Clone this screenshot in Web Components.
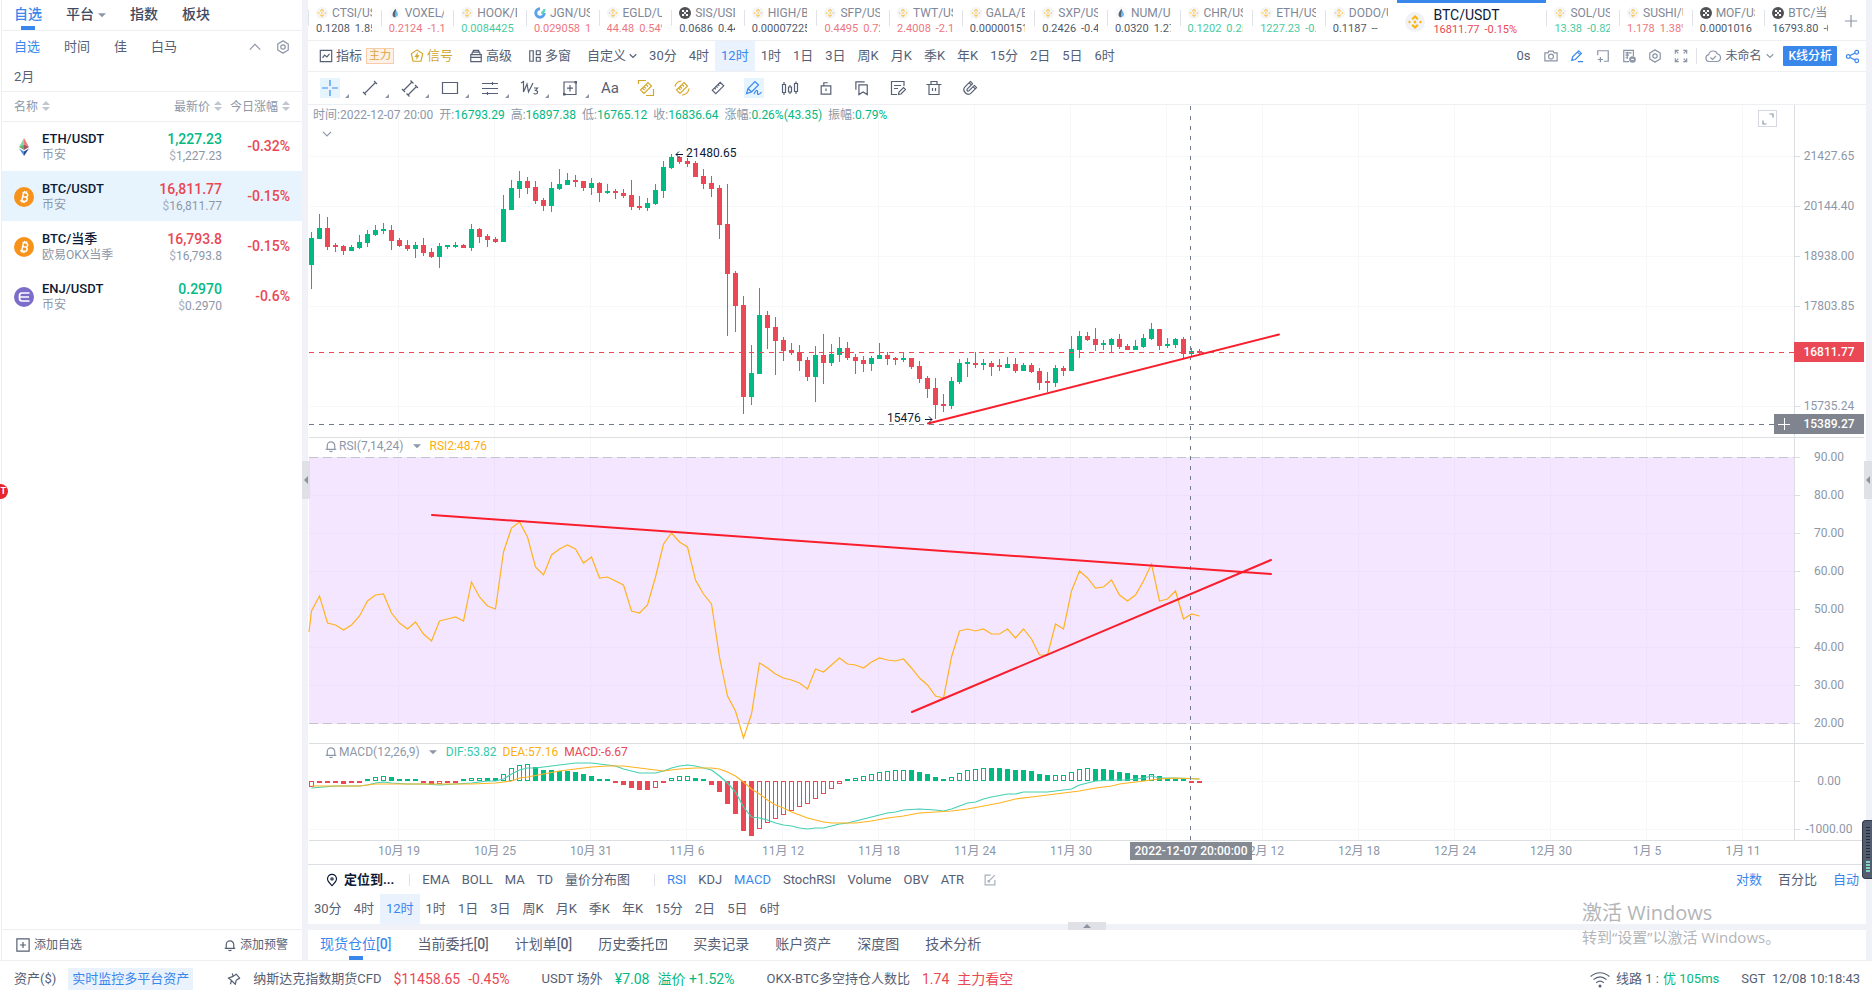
<!DOCTYPE html>
<html lang="zh-CN">
<head>
<meta charset="utf-8">
<meta name="viewport" content="width=device-width, initial-scale=1">
<title>BTC/USDT 16811.77</title>
<style>
  html, body { margin: 0; }
  body {
    --blue: #3a87ec; --ink: #566074; --dark: #0e1a35; --muted: #8d97a8;
    --up: #03b983; --down: #e94854; --line: #edeff3; --gutter: #f1f2f7; --tint: #e9f2fd; --gold: #d4a72c;
    font: 13px/20px Roboto, "Noto Sans CJK SC", sans-serif;
    color: var(--ink); background: #fff;
  }
</style>
</head>
<body>
<trade-app></trade-app>
<script>
const BASE = `
  *, *::before { box-sizing: border-box; }
  :host { display: block; }
  :host([hidden]) { display: none; }
  button { font: inherit; color: inherit; background: none; border: 0; padding: 0; margin: 0; white-space: nowrap; cursor: pointer; }
  a { color: inherit; text-decoration: none; }
  .up { color: var(--up); } .down { color: var(--down); }
`;
function define(tag, css, html, ready) {
  const tpl = document.createElement('template');
  tpl.innerHTML = '<style>' + BASE + css + '</style>' + html;
  customElements.define(tag, class extends HTMLElement {
    connectedCallback() {
      if (this.shadowRoot) return;
      const root = this.attachShadow({ mode: 'open' });
      root.appendChild(tpl.content.cloneNode(true));
      if (ready) ready.call(this, root);
    }
  });
}

/* ---------- icons (16 x 16 grid, stroked with the current colour) ---------- */
const F = 'fill="currentColor" stroke="none"';
const ICONS = {
  chart: '<path d="M1.500 1.500h13v13h-13zM4 10l2.500-3 2.500 2 3-3.500"/>',
  signal: '<path d="M8 1l6.500 4.500-2 8.500h-9l-2-8.500z" stroke-linejoin="round"/><path d="M9 3.500L5 9h2.500L7 12.500 11 7H8.500z" '+F+'/>',
  box: '<path d="M2 6.500h12v8H2zM2 9.500h12M3 6.500l1-3h8l1 3M5 3.500v-2h6v2"/>',
  windows: '<path d="M2 2h4v12H2zM9.500 2H14v4.500H9.500zM9.500 9.500H14V14H9.500z"/>',
  down: '<path d="M1.500 4.500L8 11l6.500-6.500"/>',
  up: '<path d="M1 11.500L8 4.500l7 7"/>',
  hex: '<path d="M8 1l6 3.500v7L8 15l-6-3.500v-7z" stroke-linejoin="round"/><circle cx="8" cy="8" r="2.500"/>',
  camera: '<path d="M1 4.500h3.500l1-2h5l1 2H15v9H1z"/><circle cx="8" cy="8.700" r="2.800"/>',
  pencil: '<path d="M2 13l1-4 7-7 3 3-7 7zM8.500 3.500l3 3M9 14.500h6"/>',
  addpane: '<path d="M2 7V2h12v12H9M2 12h6M5 9v6"/>',
  save: '<path d="M13 8V1.500H2v13h6M4 4.500h7M4 7h4M6 3v8M4 10h3"/><circle cx="12" cy="12" r="3.800" '+F+'/><path d="M10.500 12h3" stroke="#fff"/>',
  expand: '<path d="M5.500 1.500h-4v4M1.500 1.500L5 5M10.500 1.500h4v4M14.500 1.500L11 5M5.500 14.500h-4v-4M1.500 14.500L5 11M10.500 14.500h4v-4M14.500 14.500L11 11"/>',
  cloud: '<path d="M4 13.500a3.500 3.500 0 01-.3-6.900A4.600 4.600 0 0112.500 6 3.800 3.800 0 0112 13.500z"/><path d="M5.500 9.500l2 2 3.500-3.500"/>',
  share: '<circle cx="3.500" cy="8" r="2"/><circle cx="12.500" cy="3.500" r="2"/><circle cx="12.500" cy="12.500" r="2"/><path d="M5.300 7l5.400-2.600M5.300 9l5.400 2.600"/>',
  cross: '<path d="M8 0v6M8 10v6M0 8h6M10 8h6"/>',
  line: '<path d="M2.500 13.500l11-11M1 12l3 3M12 1l3 3"/>',
  channel: '<path d="M1.500 10.500l8.500-8.500M6 15l8.500-8.500M0 9l3 3M8.500 .5l3 3M4.500 13.500l3 3M13 5l3 3"/>',
  rect: '<path d="M.5 2.500h15v11H.5z"/>',
  hlines: '<path d="M0 3.500h16M0 8.500h16M0 13.500h16M10.500 2v3M5.500 12v3"/>',
  wave: '<path d="M-1 3l2.500-1.500V12L5 4l1.500 8L11 3"/><path d="M12 8h3.500l-2 2.500c3 0 2.500 3.500 0 3.500-1 0-1.500-.5-1.500-1"/>',
  plusbox: '<path d="M2 2h12v12.500H2zM8 5v6.500M5 8.200h6"/><path d="M1 13h2.500v2.500H1zM12.500 1H15v2.500h-2.500z" '+F+'/>',
  ruler: '<path d="M1.500 10.500l9-9 4 4-9 9zM8 4l1.500 1.500M6 6l1.500 1.500M4 8l1.500 1.500"/>',
  rulersq: '<path d="M2.500 10l7.500-7.500 3.500 3.500L6 13.500zM8 4.500l2 2M6 6.500l2 2M4.500 8l2 2M.5 4V.5H8M15.500 9v6.500H8"/>',
  rulercirc: '<path d="M2.500 10l7.500-7.500 3.500 3.500L6 13.500zM8 4.500l2 2M6 6.500l2 2M4.500 8l2 2M1 6.500A7 7 0 017.500 1M15 8.500A7 7 0 018 15"/>',
  brush: '<path d="M.5 13.500l1.500-5 7-7 3.500 3.500-7 7-5 1.500zM2 8.500l3.500 3.500M8 14c3-6 4-3 3.500-1s2 2 4-1"/>',
  candles: '<path d="M.5 4.500h3v8h-3zM2 2v2.500M2 12.500V15M6.500 7h3v5h-3zM8 5v2M8 12v2M12.500 3.500h3v8h-3zM14 1.500v2M14 11.500V14"/>',
  lock: '<path d="M2.500 5.500h11v9.500h-11zM5.500 5.500v-3.500h4.500M8 8.500v3"/>',
  bookmark: '<path d="M4.500 4.500H14V15.500l-4.750-3-4.750 3zM1 10V1h10"/>',
  note: '<path d="M14 6V1.500H1.500v13H7M4 5.500h7M4 8.500h4M8.500 14.500l.5-2.500 4.500-4.500 2 2L11 14z"/>',
  trash: '<path d="M.5 4.500h15M3 4.500v10h10v-10M5 4.500v-3h6v3M6.500 8v3M9.500 8v3"/>',
  magnet: '<path d="M8.500 .5L2.500 6.500C-2 11 5 18 9.500 13.500L15.500 7.500 13 5 7 11C5.500 12.500 3.500 10.500 5 9L11 3zM7 2L9.500 4.500M11.500 6.500L14 9" stroke-linejoin="round"/>',
  bell: '<path d="M3 12.500V7.500a5 5 0 0110 0v5M1 12.500h14M6 14.500c1 1 3 1 4 0"/>',
  pin: '<path d="M8 15.500C5 12 2 9.500 2 6.500a6 6 0 0112 0C14 9.500 11 12 8 15.500z"/><circle cx="8" cy="6.500" r="1.500"/>',
  edit: '<path d="M9 1.500H1.500v13h13V8M6 10l8.500-8.500M5.500 8v2.500H8"/>',
  addbox: '<path d="M1 1h14v14H1zM8 4.500v7M4.500 8h7"/>',
  help: '<path d="M1 1h14v14H1z"/><path d="M5.800 6.200c0-3 4.600-2.600 4.400 0C10 7.700 8 7.700 8 9.500M8 11v1.300"/>',
  tack: '<path d="M6 1.500l1 3.500-5.500 2 3.500 2.500L4 14M5 9.500l4.500 4.500 1-4.500L14.500 7 10.500 2.500 7 5" stroke-linejoin="round"/>',
  plus: '<path d="M8 1v14M1 8h14"/>',
  wifi: '<path d="M.5 6c4.500-4 10.500-4 15 0M2.800 8.500c3.500-3 7-3 10.400 0M5 11c2-1.700 4-1.700 6 0"/><circle cx="8" cy="13.500" r="1.200" '+F+'/>',
  caret: '<path d="M0 4.500h16l-8 8z" '+F+'/>',
  corner: '<path d="M9.500 3H13v3.500M3 9.500V13h3.500"/>'
};
define('ui-icon', `
  :host { display: inline-block; flex: none; width: var(--size, 14px); height: var(--size, 14px); }
  svg { display: block; width: 100%; height: 100%; overflow: visible; fill: none; stroke: currentColor; stroke-width: 1.2; }
  svg * { vector-effect: non-scaling-stroke; }
`, '<svg viewBox="0 0 16 16" aria-hidden="true"></svg>', function (root) {
  root.querySelector('svg').innerHTML = ICONS[this.getAttribute('name')] || '';
});

/* ---------- coin and exchange marks ---------- */
const COINS = {
  bnb: '<circle cx="10" cy="10" r="10" fill="#f1f2f6"/><g fill="#fbb40f"><path d="M10 3l3.600 3.600-1.500 1.500L10 6 7.900 8.100 6.400 6.600z"/><path d="M10 17l3.600-3.600-1.500-1.500L10 14l-2.100-2.100-1.500 1.500z"/><path d="M4.500 8.500L6 10l-1.500 1.500L3 10zM15.500 8.500L17 10l-1.500 1.500L14 10zM10 8.300l1.700 1.700-1.700 1.700L8.300 10z"/></g>',
  okx: '<circle cx="10" cy="10" r="10" fill="#15171c"/><path d="M5 5h3.500v3.500H5zM11.500 5H15v3.500h-3.500zM8.500 8.500h3v3h-3zM5 11.500h3.500V15H5zM11.500 11.500H15V15h-3.500z" fill="#fff"/>',
  gate: '<circle cx="10" cy="10" r="10" fill="#f6f7fa"/><path d="M11 3c-2 4-4 6-4 9.500a4 4 0 008 0c0-4-3-5-4-9.500z" fill="#3aa5e8"/><path d="M11 3c-3 4-5 6-5 9.500A4 4 0 0011 17c-3-4 1-8 0-14z" fill="#1d2b45"/>',
  kucoin: '<path d="M10 3a7 7 0 107 7" fill="none" stroke="#2383e8" stroke-width="5"/><path d="M12 9.500a5 5 0 005-6" fill="none" stroke="#24cba6" stroke-width="4"/>',
  btc: '<circle cx="10" cy="10" r="10" fill="#f7931a"/><path d="M7.500 5.800h3.700c2.600 0 2.700 3.400.3 3.900 3 .3 2.800 4.500-.5 4.500H7M8.600 5.800v8.400M8.600 9.800h3M9.500 4v2M11.500 4v2M9 14v2M11 14v2" stroke="#fff" stroke-width="1.500" fill="none" transform="rotate(12 10 10)"/>',
  eth: '<path d="M10 1L5 10l5-2.500z" fill="#8fd3a8"/><path d="M10 1l5 9-5-2.500z" fill="#ef7d75"/><path d="M5 10l5-2.500V13z" fill="#5fb56b"/><path d="M15 10l-5-2.500V13z" fill="#a3546d"/><path d="M5 11.500l5 3V19z" fill="#4a90e2"/><path d="M15 11.500l-5 3V19z" fill="#2a4c8f"/>',
  enj: '<circle cx="10" cy="10" r="10" fill="#7b6dc9"/><path d="M15.500 6H8c-2 0-2.500 1-2.500 3v2c0 2 1 3 2.500 3h7.500M6 10h9" stroke="#fff" stroke-width="1.700" fill="none"/>'
};
define('coin-mark', `
  :host { display: inline-block; flex: none; width: var(--size, 20px); height: var(--size, 20px); }
  svg { display: block; width: 100%; height: 100%; }
`, '<svg viewBox="0 0 20 20" aria-hidden="true"></svg>', function (root) {
  root.querySelector('svg').innerHTML = COINS[this.getAttribute('name')];
});

/* ---------- left watch list ---------- */
define('watch-list', `
  :host { display: flex; flex-direction: column; border-left: 1px solid var(--line); }
  .top, .groups { display: flex; align-items: center; gap: 24px; padding: 0 12px; }
  .top { height: 31px; border-bottom: 1px solid var(--line); font-size: 14px; font-weight: 500; color: #3f4a60; }
  .top button { position: relative; height: 30px; padding-bottom: 2px; }
  .on { color: var(--blue); }
  .top .on::before { content: ""; position: absolute; bottom: 0; left: 7px; width: 14px; height: 4px; background: var(--blue); }
  .top ui-icon { --size: 8px; margin-left: 4px; color: var(--muted); }
  .groups { height: 31px; }
  .groups .tools { display: flex; align-items: center; gap: 15px; margin-left: auto; color: var(--muted); }
  .groups .tools ui-icon { display: block; }
  .small { --size: 12px; }
  .more { height: 30px; border-bottom: 1px solid var(--line); }
  table { width: 100%; border-collapse: collapse; }
  th { height: 29px; padding: 2px 0 0; font-size: 12px; font-weight: 400; text-align: right; color: var(--muted); border-bottom: 1px solid var(--line); white-space: nowrap; }
  th:first-child { text-align: left; padding-left: 12px; }
  th:last-child, td:last-child { width: 80px; padding-right: 12px; }
  .sort { display: inline-block; width: 8px; height: 10px; margin-left: 4px; fill: #c1c7d1; }
  td { height: 50px; padding: 2px 0 0; text-align: right; line-height: 16px; }
  td:last-child { padding-top: 0; }
  td:first-child { text-align: left; padding-left: 12px; }
  td small { display: block; font-size: 12px; color: var(--muted); }
  td i { font-style: normal; opacity: .75; }
  .pair { display: flex; align-items: center; gap: 8px; }
  .pair b { font-weight: 500; color: var(--dark); }
  td strong, td em { font-style: normal; font-size: 14px; font-weight: 500; }
  tr.sel td { background: #e8f4fd; }
  .foot { display: flex; justify-content: space-between; align-items: center; height: 31px; margin-top: auto; padding: 0 14px; border-top: 1px solid var(--line); font-size: 12px; }
  .foot button { display: flex; align-items: center; gap: 4px; }
  .foot .bell { --size: 12px; }
`, `
  <nav class="top"><button class="on">自选</button><button>平台<ui-icon name="caret"></ui-icon></button><button>指数</button><button>板块</button></nav>
  <nav class="groups"><button class="on">自选</button><button>时间</button><button>佳</button><button>白马</button>
    <span class="tools"><button class="small" aria-label="收起"><ui-icon name="up"></ui-icon></button><button aria-label="设置"><ui-icon name="hex"></ui-icon></button></span></nav>
  <nav class="groups more"><button>2月</button></nav>
  <table><thead><tr></tr></thead><tbody></tbody></table>
  <div class="foot"><button><ui-icon name="addbox"></ui-icon>添加自选</button><button class="bell"><ui-icon name="bell"></ui-icon>添加预警</button></div>
`, function (root) {
  const sort = '<svg class="sort" viewBox="0 0 8 10"><path d="M4 0l4 4H0zM4 10l4-4H0z"/></svg>';
  root.querySelector('thead tr').innerHTML = ['名称', '最新价', '今日涨幅'].map(t => `<th scope="col">${t}${sort}</th>`).join('');
  root.querySelector('tbody').innerHTML = [
    ['eth', 'ETH/USDT', '币安', '1,227.23', 'up', '-0.32%'],
    ['btc', 'BTC/USDT', '币安', '16,811.77', 'down', '-0.15%', 'sel'],
    ['btc', 'BTC/当季', '欧易OKX当季', '16,793.8', 'down', '-0.15%'],
    ['enj', 'ENJ/USDT', '币安', '0.2970', 'up', '-0.6%']
  ].map(r => `<tr class="${r[6] || ''}"><td><div class="pair"><coin-mark name="${r[0]}"></coin-mark><div><b>${r[1]}</b><small>${r[2]}</small></div></div></td>
    <td><strong class="${r[4]}">${r[3]}</strong><small><i>$</i>${r[3]}</small></td><td><em class="down">${r[5]}</em></td></tr>`).join('');
});

/* ---------- ticker strip ---------- */
define('ticker-bar', `
  :host { display: flex; height: 41px; border-bottom: 1px solid var(--line); }
  .tab { flex: 1 1 0; min-width: 0; position: relative; text-align: left; padding: 0 9px 0 8px; line-height: 16px; overflow: hidden; }
  .tab:not(.on)::before { content: ""; position: absolute; left: 0; top: 10px; width: 1px; height: 16px; background: #dfe2e8; }
  .tab:first-child::before { display: none; }
  .in { opacity: .75; overflow: hidden; }
  .name { display: flex; align-items: center; gap: 4px; height: 18px; font-size: 12px; --size: 12px; }
  .val { display: flex; gap: 5px; height: 14px; font-size: 11px; line-height: 14px; color: var(--dark); }
  .val.up { color: var(--up); } .val.down { color: var(--down); }
  .tab.on { flex: 0 0 149px; display: flex; align-items: center; gap: 8px; border-top: 3px solid var(--blue); }
  .on .name { font-size: 14px; height: 17px; color: var(--dark); }
  .on .in { opacity: 1; }
  .add { flex: 0 0 29px; color: var(--muted); }
  .add ui-icon { vertical-align: middle; }
`, '', function (root) {
  const list = [
    ['bnb', 'CTSI/USDT', '0.1208', '1.85%', ''], ['gate', 'VOXEL/USDT', '0.2124', '-1.17%', 'down'], ['bnb', 'HOOK/BNB', '0.0084425', '', 'up'],
    ['kucoin', 'JGN/USDT', '0.029058', '1.2%', 'down'], ['bnb', 'EGLD/USDT', '44.48', '0.54%', 'down'], ['okx', 'SIS/USDT', '0.0686', '0.44%', ''],
    ['bnb', 'HIGH/BTC', '0.000072250', '', ''], ['bnb', 'SFP/USDT', '0.4495', '0.72%', 'down'], ['bnb', 'TWT/USDT', '2.4008', '-2.11%', 'down'],
    ['bnb', 'GALA/BNB', '0.00000151', '', ''], ['bnb', 'SXP/USDT', '0.2426', '-0.45%', ''], ['gate', 'NUM/USDT', '0.0320', '1.27%', ''],
    ['bnb', 'CHR/USDT', '0.1202', '0.25%', 'up'], ['bnb', 'ETH/USDT', '1227.23', '-0.32%', 'up'], ['bnb', 'DODO/USDT', '0.1187', '--', ''],
    ['bnb', 'BTC/USDT', '16811.77', '-0.15%', 'down', 'on'],
    ['bnb', 'SOL/USDT', '13.38', '-0.82%', 'up'], ['bnb', 'SUSHI/USDT', '1.178', '1.38%', 'down'], ['okx', 'MOF/USDT', '0.0001016', '', ''], ['okx', 'BTC/当季', '16793.80', '-0.15%', '']
  ];
  const cells = list.map(([c, n, p, d, k, s]) => {
    const mark = `<coin-mark name="${c}"></coin-mark>`, val = `<div class="val ${k}"><span>${p}</span><span>${d}</span></div>`;
    return s === 'on'
      ? `<button class="tab on">${mark}<div class="in"><div class="name">${n}</div>${val}</div></button>`
      : `<button class="tab"><div class="in"><div class="name">${mark}<span>${n}</span></div>${val}</div></button>`;
  }).join('');
  root.innerHTML += cells + '<button class="add" aria-label="添加"><ui-icon name="plus"></ui-icon></button>';
});

/* ---------- interval picker, used above and below the chart ---------- */
define('period-picker', `
  :host { display: flex; height: 30px; }
  button { padding: 0 6px; height: 30px; }
  .on { background: var(--tint); color: var(--blue); }
`, '', function (root) {
  root.innerHTML += ['30分', '4时', '12时', '1时', '1日', '3日', '周K', '月K', '季K', '年K', '15分', '2日', '5日', '6时']
    .map(t => `<button${t === '12时' ? ' class="on" aria-pressed="true"' : ''}>${t}</button>`).join('');
});

/* ---------- chart toolbar ---------- */
define('chart-toolbar', `
  :host { display: flex; align-items: center; height: 31px; padding: 0 6px 0 11px; border-bottom: 1px solid var(--line); }
  .left, .right, .right .icons, .left button { display: flex; align-items: center; }
  .left { gap: 16px; }
  .left button { gap: 3px; }
  .badge { margin-left: 1px; padding: 0 2px; height: 16px; border: 1px solid #f6cda8; background: #fdf1e7; color: #dda345; font-size: 11px; line-height: 14px; width: 28px; text-align: center; }
  .gold { color: var(--gold); }
  .drop { --size: 8px; }
  period-picker { margin-left: 6px; }
  .right { margin-left: auto; gap: 8px; }
  .icons { gap: 12px; color: #8b95a6; margin: 0 0 0 6px; }
  .icons button, .share { display: flex; }
  .blue { color: var(--blue); }
  hr { width: 1px; height: 16px; margin: 0; border: 0; background: #dfe2e8; }
  .layout { display: flex; align-items: center; gap: 4px; font-size: 12px; --size: 16px; }
  .layout ui-icon { color: var(--muted); }
  .layout .arrow { --size: 8px; margin: 0 1px; }
  .k { height: 20px; padding: 0 5px; background: var(--blue); color: #fff; font-size: 12px; font-weight: 500; border-radius: 1px; }
  .share { --size: 15px; }
`, `
  <div class="left">
    <button><ui-icon name="chart"></ui-icon>指标<span class="badge">主力</span></button>
    <button class="gold"><ui-icon name="signal"></ui-icon>信号</button>
    <button><ui-icon name="box"></ui-icon>高级</button>
    <button><ui-icon name="windows"></ui-icon>多窗</button>
    <button class="drop" aria-haspopup="menu">自定义<ui-icon name="down"></ui-icon></button>
  </div>
  <period-picker></period-picker>
  <div class="right">
    <span>0s</span>
    <div class="icons">
      <button aria-label="截图"><ui-icon name="camera"></ui-icon></button>
      <button class="blue" aria-label="画线"><ui-icon name="pencil"></ui-icon></button>
      <button aria-label="新窗口"><ui-icon name="addpane"></ui-icon></button>
      <button aria-label="保存"><ui-icon name="save"></ui-icon></button>
      <button aria-label="设置"><ui-icon name="hex"></ui-icon></button>
      <button aria-label="全屏"><ui-icon name="expand"></ui-icon></button>
    </div>
    <hr>
    <button class="layout" aria-haspopup="menu"><ui-icon name="cloud"></ui-icon>未命名<ui-icon class="arrow" name="down"></ui-icon></button>
    <button class="k">K线分析</button>
    <button class="share blue" aria-label="分享"><ui-icon name="share"></ui-icon></button>
  </div>
`);

define('draw-tools', `
  :host { display: flex; align-items: center; gap: 16px; height: 33px; padding-left: 12px; border-bottom: 1px solid var(--line); --size: 16px; }
  button { display: grid; place-items: center; width: 20px; height: 20px; }
  .menu { position: relative; margin-right: 4px; }
  .menu::before { content: ""; position: absolute; left: 25px; bottom: 0; border: solid transparent; border-width: 0 0 4px 4px; border-bottom-color: var(--muted); }
  .on { background: #e6f4fe; color: var(--blue); }
  .gold { color: var(--gold); }
  .text { font-size: 15px; }
  .compact { --size: 14px; }
`, '', function (root) {
  root.innerHTML += [['cross', 'menu on'], ['line', 'menu'], ['channel', 'menu'], ['rect', 'menu'], ['hlines', 'menu'], ['wave', 'menu'], ['plusbox', 'menu'], ['', 'text'],
    ['rulersq', 'gold'], ['rulercirc', 'gold'], ['ruler', 'compact'], ['brush', 'on'], ['candles', ''], ['lock', 'compact'], ['bookmark', 'compact'], ['note', ''], ['trash', ''], ['magnet', 'compact']]
    .map(([n, c]) => `<button class="${c}">${n ? `<ui-icon name="${n}"></ui-icon>` : 'Aa'}</button>`).join('');
});

/* ---------- K-line chart ---------- */
/* candles: direction, body top, body bottom, high, low, in pixels of the price pane */
const CANDLES = `G133,160,127,184 G123,134,109,134 R123,142,112,145 R140,142,138,147 R141,146,140,150 G142,146,140,146 G137,143,130,144 G129,138,125,142
G125,130,120,131 G124,126,118,129 R125,136,120,145 R135,141,133,142 R140,144,135,146 G140,144,137,153 R140,148,133,151 R147,152,143,153
G141,152,138,163 G140,142,140,144 G140,142,137,143 R140,143,139,143 G124,143,119,146 R124,132,123,138 R131,135,129,142 R134,137,132,138
G104,137,90,137 G83,105,75,105 G76,84,66,93 R76,83,72,89 R82,96,76,99 R95,101,93,106 G83,101,77,107 G79,84,64,85
G75,80,68,80 R75,77,70,82 R76,83,76,86 G78,83,73,90 R78,88,77,97 G86,88,79,89 R86,88,84,94 R88,91,84,93
R90,102,75,105 R101,103,91,105 G98,103,93,106 G85,99,79,100 G62,86,56,93 G52,63,49,64 R52,57,51,59 R56,59,53,62
R58,72,56,72 R71,79,64,84 R78,84,71,92 R83,120,80,134 R119,169,79,231 R168,201,166,227 R200,292,191,309 G268,292,240,300
G210,269,183,269 R210,223,206,244 R222,236,212,270 R235,246,232,256 R245,248,238,250 R247,256,240,266 R255,272,252,276 G250,272,241,297
R250,258,229,279 G249,258,239,261 G243,250,232,257 R243,253,237,255 R252,256,249,269 R255,259,251,267 G253,259,251,266 G250,254,238,254
R250,254,247,260 R253,255,252,260 G253,255,248,257 R253,262,253,264 R261,274,256,278 R273,284,271,293 R283,300,273,314 R299,301,289,307
G276,301,272,304 G258,277,254,279 G257,259,253,272 R258,260,247,263 G258,260,254,265 R258,262,256,271 R260,262,254,266 G259,263,252,263
R259,266,253,268 G260,266,258,266 R260,267,258,268 R266,278,263,285 R276,278,267,287 G263,278,260,282 R263,266,261,271 G244,266,231,266
G231,245,226,253 R231,235,227,236 R234,240,223,246 G238,240,235,245 G234,240,233,248 R234,242,229,244 R241,245,239,245 G241,245,235,245
G233,242,229,243 G224,234,218,235 R224,241,224,245 G239,241,233,243 G234,240,233,243 R234,249,232,254 G246,249,243,251 R246,248,244,250`.split(/\s+/);
const RSI = [506,491,518,520,525,520,511,496,490,489,508,518,524,517,529,536,516,514,512,516,477,492,501,504,447,423,417,432,462,470,450,444,440,444,458,452,473,472,476,480,506,508,500,472,439,428,437,442,475,489,499,552,591,606,633,609,558,563,569,573,575,578,584,564,567,560,553,559,560,563,557,553,555,556,554,563,573,580,591,593,552,526,524,526,524,529,529,524,533,524,534,550,550,519,524,486,466,473,483,482,475,490,496,490,476,459,496,494,486,514,509,511];
/* histogram: signed height, "h" marks an outlined bar */
const HIST = '-6h -2 -2 -2 -3 -2 -1 2 4h 5h 4 2 2 1 -2 -3 -3h -2 -1 1 3h 3h 3 3 7h 13h 16h 17h 14 11 11 10 10 9 7 5 2 1 -2 -4 -7 -9 -9 -7h -2 3h 5h 5h 3 1 -4 -11 -23 -33 -50 -55 -48h -42h -38h -34h -30h -26h -23h -18h -13h -8h -3h 2 3h 5h 7h 9h 10h 11h 11h 11 9 7 4 2 4h 8h 11h 12h 13h 13 13 12 11 11 10 7 6 6h 6h 9h 12h 13h 12 12 11 9 8 6 6 7h 5 3 2 2 -2 -2'.split(' ');
const DIF = '0,683 3,681 6,681 7,680 8,678 9,677 10,678 12,679 14,679 16,680 18,679 20,678 22,676 23,676 24,674 25,669 26,665 27,663 28,663 29,662 30,661 31,660 32,659 33,658 35,658 36,659 38,661 39,664 41,668 42,668 43,668 44,666 45,663 46,661 47,660 48,661 49,663 50,665 51,671 52,678 53,687 54,702 55,712 56,713 57,715 58,718 59,720 60,721 61,723 62,724 63,723 64,723 65,721 66,719 67,718 68,716 69,714 70,712 71,710 72,708 73,707 74,705 76,704 78,705 79,706 80,704 81,701 82,698 83,697 84,694 85,692 87,689 88,689 89,687 92,687 94,685 95,684 96,680 97,678 98,676 100,675 102,675 104,673 105,671 106,673 108,673 111,674';
const DEA = '0,681 6,681 8,679 18,679 20,679 23,678 24,677 25,676 26,673 27,672 29,669 31,666 33,664 35,662 37,661 39,661 41,663 43,665 44,666 46,664 48,663 50,663 51,664 52,667 53,671 54,677 55,684 56,689 57,695 58,700 59,703 60,707 61,710 62,713 63,715 64,717 65,718 68,718 70,716 72,713 74,711 76,708 78,707 80,706 82,704 84,701 86,698 88,694 90,692 94,688 96,686 98,683 100,681 101,679 103,677 105,675 106,674 108,673 111,674';

define('kline-chart', `
  :host { display: flex; position: relative; height: 760px; border-bottom: 1px solid #dcdfe4; font-size: 12px; }
  .plot { flex: 1 1 0; min-width: 0; height: 759px; }
  .axis { flex: none; width: 72px; height: 759px; }
  svg { display: block; font-size: 12px; }
  svg text { fill: #8d97a8; }
  .g { fill: #03b983; stroke: #03b983; } .r { fill: #e94854; stroke: #e94854; }
  .body { stroke: none; } .h { fill: #fff; }
  .grid line { stroke: #f6f8fa; }
  .grid .tinted { stroke: #efe0fb; }
  .sep line { stroke: #dcdfe2; }
  svg text.mark { fill: #0e1a35; }
  svg text.tag { fill: #fff; font-weight: 500; }
  .info, .legend { position: absolute; display: flex; align-items: center; color: #8d97a8; line-height: 20px; white-space: nowrap; }
  .info { left: 5px; top: 0; gap: 6px; }
  .legend { left: 17px; --size: 12px; }
  .legend ui-icon + span { margin-left: 2px; }
  .legend .menu { --size: 8px; margin: 0 9px; display: flex; }
  .legend span + span { margin-left: 6px; }
  .rsi { top: 331px; } .macd { top: 637px; }
  .fold, .full { position: absolute; display: grid; place-items: center; color: #8d97a8; }
  .fold { left: 14px; top: 24px; --size: 10px; }
  .full { right: 89px; top: 5px; width: 19px; height: 17px; border: 1px solid #d5d8e0; --size: 16px; }
  .y { color: #fdae0d; } .t { color: #36c9a9; }
`, `
  <svg class="plot" role="img" aria-label="BTC/USDT 12时 K线"></svg>
  <svg class="axis" aria-hidden="true"></svg>
  <div class="info"><span>时间:2022-12-07 20:00</span><span>开:<span class="up">16793.29</span></span><span>高:<span class="up">16897.38</span></span><span>低:<span class="up">16765.12</span></span><span>收:<span class="up">16836.64</span></span><span>涨幅:<span class="up">0.26%(43.35)</span></span><span>振幅:<span class="up">0.79%</span></span></div>
  <button class="fold" aria-label="收起"><ui-icon name="down"></ui-icon></button>
  <button class="full" aria-label="放大"><ui-icon name="corner"></ui-icon></button>
  <div class="legend rsi"><ui-icon name="bell"></ui-icon><span>RSI(7,14,24)</span><button class="menu" aria-label="RSI"><ui-icon name="caret"></ui-icon></button><span class="y">RSI2:48.76</span></div>
  <div class="legend macd"><ui-icon name="bell"></ui-icon><span>MACD(12,26,9)</span><button class="menu" aria-label="MACD"><ui-icon name="caret"></ui-icon></button><span class="t">DIF:53.82</span><span class="y">DEA:57.16</span><span class="down">MACD:-6.67</span></div>
`, function (root) {
  const X = i => 3.5 + 8 * i;
  const hl = (y, a = '') => `<line x1="1" x2="100%" y1="${y}" y2="${y}" ${a}/>`;
  const path = s => s.split(' ').map(p => { const [i, y] = p.split(','); return X(+i) + ',' + y; }).join(' ');
  let s = '<g class="grid">';
  const days = ['10月 19', '10月 25', '10月 31', '11月 6', '11月 12', '11月 18', '11月 24', '11月 30', '12月 6', '12月 12', '12月 18', '12月 24', '12月 30', '1月 5', '1月 11'];
  s += '<rect x="1" y="352" width="100%" height="267" fill="#f4e6ff"/>';
  days.forEach((d, k) => {
    const x = 90.5 + 96 * k;
    s += `<line x1="${x}" x2="${x}" y1="0" y2="735"/><line class="tinted" x1="${x}" x2="${x}" y1="352" y2="619"/>`;
  });
  for (let k = 0; k < 6; k++) s += hl(51.5 + 50 * k);
  for (let k = 1; k < 7; k++) s += hl(352.5 + 38 * k, 'class="tinted"');
  s += hl(676.5) + hl(724.5) + '</g><g class="sep">' + hl(332.5) + hl(638.5) + hl(735.5) + '</g>';
  [352.5, 618.5].forEach(y => s += hl(y, 'stroke="#c4c4cb" stroke-dasharray="9 5"'));
  days.forEach((d, k) => s += `<text x="${91 + 96 * k}" y="750" text-anchor="middle">${d}</text>`);
  CANDLES.forEach((c, i) => {
    const [a, b, h, l] = c.slice(1).split(',').map(Number), x = X(i);
    s += `<g class="${c[0] === 'G' ? 'g' : 'r'}"><line x1="${x}" x2="${x}" y1="${h}" y2="${l}"/><rect class="body" x="${x - 2.5}" y="${a}" width="5" height="${b - a}"/></g>`;
  });
  s += `<polyline points="1,527 ${path(RSI.map((y, i) => i + ',' + y).join(' '))}" fill="none" stroke="#ffb31f" stroke-width="1.2"/>`;
  HIST.forEach((v, i) => {
    const n = parseInt(v), hollow = v.endsWith('h'), x = X(i) - 2.5, hgt = Math.max(Math.abs(n), 2), y = n > 0 ? 676 - hgt : 676;
    const cls = n > 0 ? 'g' : 'r';
    s += hollow ? `<rect class="${cls}" x="${x + .5}" y="${y + .5}" width="4" height="${hgt - 1}" style="fill:#fff"/>`
      : `<rect class="${cls} body" x="${x}" y="${y}" width="5" height="${hgt}"/>`;
  });
  s += `<polyline points="${path(DIF)}" fill="none" stroke="#45d0b2" stroke-width="1.2"/><polyline points="${path(DEA)}" fill="none" stroke="#ffb31f" stroke-width="1.2"/>`;
  s += hl(247.5, 'stroke="#e94854" stroke-dasharray="5 5"') + hl(319.5, 'stroke="#717b8c" stroke-dasharray="5 5"');
  s += '<line x1="882.5" x2="882.5" y1="1" y2="735" stroke="#717b8c" stroke-dasharray="4 6"/>';
  s += '<g stroke="#fa1e2d" stroke-width="2" stroke-linecap="round"><path d="M620 318.500L971 229.500M124 410L963 469M604 607L963 455"/></g>';
  s += '<text class="mark" x="378" y="52">21480.65</text><path d="M368 49.500h7M371 46.500l-3 3 3 3" stroke="#0e1a35" fill="none"/>';
  s += '<text class="mark" x="579" y="317">15476</text><path d="M617 314.500h7M621 311.500l3 3-3 3" stroke="#0e1a35" fill="none"/>';
  s += '<rect x="822" y="737" width="122" height="18" fill="#80848e" fill-opacity=".96"/><text class="tag" x="883" y="750" text-anchor="middle">2022-12-07 20:00:00</text>';
  s += '<svg x="100%" y="309" width="20" height="20" overflow="visible"><rect x="-20" width="20" height="20" fill="#80848e"/><path d="M-16 10.500h12M-9.500 4v12" stroke="#fff"/></svg>';
  root.querySelector('.plot').innerHTML = s;

  let a = '<g stroke="#dcdfe2"><line x1=".5" x2=".5" y1="0" y2="735"/><line x1="0" x2="70" y1="332.500" y2="332.500"/><line x1="0" x2="70" y1="638.500" y2="638.500"/><line x1="0" x2="70" y1="735.500" y2="735.500"/></g>';
  const label = (y, t) => a += `<line x1="0" x2="6" y1="${y}" y2="${y}" stroke="#dcdfe2"/><text x="35" y="${y + 3.5}" text-anchor="middle">${t}</text>`;
  ['21427.65', '20144.40', '18938.00', '17803.85', '', '15735.24'].forEach((t, k) => t && label(51.5 + 50 * k, t));
  for (let k = 0; k < 8; k++) label(352.5 + 38 * k, (90 - 10 * k) + '.00');
  label(676.5, '0.00'); label(724.5, '-1000.00');
  a += '<rect y="237" width="70" height="20" fill="#e94854"/><text class="tag" x="35" y="251" text-anchor="middle">16811.77</text>';
  a += '<rect y="309" width="70" height="20" fill="#80848e"/><text class="tag" x="35" y="323" text-anchor="middle">15389.27</text>';
  root.querySelector('.axis').innerHTML = a;
});

/* ---------- below the chart ---------- */
define('indicator-bar', `
  :host { display: flex; align-items: center; gap: 12px; height: 29px; padding: 0 7px 0 18px; }
  .locate { display: flex; align-items: center; gap: 6px; color: var(--dark); font-weight: 700; --size: 12px; margin-right: 3px; }
  hr { width: 1px; height: 12px; margin: 0; border: 0; background: #dfe2e8; }
  hr.wide { margin-left: 12px; }
  .on { color: var(--blue); }
  .edit { --size: 12px; margin-left: 8px; color: #a9b1be; display: flex; }
  .scale { display: flex; gap: 16px; margin-left: auto; }
`, `
  <button class="locate"><ui-icon name="pin"></ui-icon>定位到...</button><hr>
  <button>EMA</button><button>BOLL</button><button>MA</button><button>TD</button><button>量价分布图</button><hr class="wide">
  <button class="on">RSI</button><button>KDJ</button><button class="on">MACD</button><button>StochRSI</button><button>Volume</button><button>OBV</button><button>ATR</button>
  <button class="edit" aria-label="编辑"><ui-icon name="edit"></ui-icon></button>
  <div class="scale"><button class="on">对数</button><button>百分比</button><button class="on">自动</button></div>
`);

define('position-tabs', `
  :host { display: flex; position: relative; border-top: 6px solid var(--gutter); }
  nav { display: flex; gap: 26px; padding-left: 12px; height: 30px; font-size: 14px; --size: 11px; }
  nav button { position: relative; height: 30px; padding-bottom: 2px; }
  .on { color: var(--blue); }
  .on::before { content: ""; position: absolute; bottom: 0; left: 29px; width: 14px; height: 4px; background: var(--blue); }
  nav b { font-weight: 500; }
  nav ui-icon { margin-left: 2px; vertical-align: -1px; }
  .grip { position: absolute; left: 760px; top: -8px; width: 38px; height: 8px; background: #dfe1e6; display: grid; place-items: center; }
  .grip svg { width: 8px; height: 4px; fill: #8b93a1; }
`, `
  <nav><button class="on">现货仓位[<b>0</b>]</button><button>当前委托[<b>0</b>]</button><button>计划单[<b>0</b>]</button><button>历史委托<ui-icon name="help"></ui-icon></button><button>买卖记录</button><button>账户资产</button><button>深度图</button><button>技术分析</button></nav>
  <button class="grip" aria-label="展开"><svg viewBox="0 0 8 4"><path d="M4 0l4 4H0z"/></svg></button>
`);

define('status-bar', `
  :host { display: flex; align-items: center; height: 35px; padding: 2px 12px 0 14px; border-top: 1px solid var(--line); white-space: nowrap; }
  .live { height: 22px; margin: 0 34px 0 12px; padding: 0 4px; background: var(--tint); color: var(--blue); }
  ui-icon { margin-right: 12px; }
  .item { display: flex; align-items: center; gap: 12px; margin-right: 32px; }
  .item b { display: flex; gap: 8px; font-weight: 400; font-size: 14px; }
  .net { display: flex; align-items: center; margin-left: auto; }
  .net ui-icon { --size: 20px; margin-right: 6px; }
  .net .up { margin-left: 4px; }
  time { margin-left: 22px; }
`, `
  <span>资产($)</span><button class="live">实时监控多平台资产</button><ui-icon name="tack"></ui-icon>
  <a class="item" href="#nasdaq">纳斯达克指数期货CFD<b class="down"><span>$11458.65</span><span>-0.45%</span></b></a>
  <a class="item" href="#usdt">USDT 场外<b class="up"><span>¥7.08</span><span>溢价 +1.52%</span></b></a>
  <a class="item" href="#ratio">OKX-BTC多空持仓人数比<b class="down"><span>1.74</span><span>主力看空</span></b></a>
  <div class="net"><ui-icon name="wifi"></ui-icon><span>线路 1 :</span><span class="up">优 105ms</span></div>
  <time>SGT&nbsp; 12/08 10:18:43</time>
`);

define('trade-app', `
  :host { display: flex; flex-direction: column; position: relative; min-height: 100vh; overflow: hidden; }
  .work { flex: 1; display: grid; grid-template-columns: 301px minmax(0, 1fr); column-gap: 6px; padding: 0 6px 0 1px; background: linear-gradient(90deg, #fff 1px, var(--gutter) 1px); }
  watch-list, main { background: #fff; }
  main { display: flex; flex-direction: column; min-width: 0; }
  position-tabs { margin-top: auto; }
  .grip { position: absolute; top: 461px; width: 8px; height: 38px; background: #dfe1e6; display: grid; place-items: center; }
  .grip svg { width: 4px; height: 8px; fill: #8b93a1; }
  .l { left: 302px; } .r { right: 0; }
  .alert { position: absolute; left: -7px; top: 484px; width: 15px; height: 15px; border-radius: 50%; background: #e5262c; color: #fff; font-size: 9px; line-height: 15px; font-weight: 700; text-align: right; padding-right: 2px; }
  .mark { position: absolute; right: 90px; bottom: 48px; width: 200px; color: #b3b5b9; font-family: "Open Sans", "Noto Sans CJK SC", sans-serif; font-size: 15px; line-height: 20px; white-space: nowrap; pointer-events: none; }
  .mark div { font-size: 20px; line-height: 28px; }
  .meter { position: absolute; right: 0; top: 820px; width: 10px; height: 59px; border: 1px solid #333b4a; border-right: 0; border-radius: 4px 0 0 4px; background: #525d70; padding: 6px 2px 5px 3px; }
  .meter i { display: block; height: 100%; background: repeating-linear-gradient(180deg, #262d3a 0 1px, transparent 1px 3px) 0 0 / 100% 33px no-repeat, repeating-linear-gradient(180deg, #7fd6c0 0 2px, transparent 2px 3px) 0 34px / 100% 12px no-repeat; }
`, `
  <div class="work">
    <watch-list></watch-list>
    <main><ticker-bar></ticker-bar><chart-toolbar></chart-toolbar><draw-tools></draw-tools><kline-chart></kline-chart><indicator-bar></indicator-bar><period-picker></period-picker><position-tabs></position-tabs></main>
  </div>
  <status-bar></status-bar>
  <button class="grip l" aria-label="收起左栏"><svg viewBox="0 0 4 8"><path d="M0 4l4-4v8z"/></svg></button>
  <button class="grip r" aria-label="展开右栏"><svg viewBox="0 0 4 8"><path d="M0 4l4-4v8z"/></svg></button>
  <span class="alert">T</span>
  <div class="mark"><div>激活 Windows</div>转到“设置”以激活 Windows。</div>
  <div class="meter"><i></i></div>
`);
</script>
</body>
</html>
